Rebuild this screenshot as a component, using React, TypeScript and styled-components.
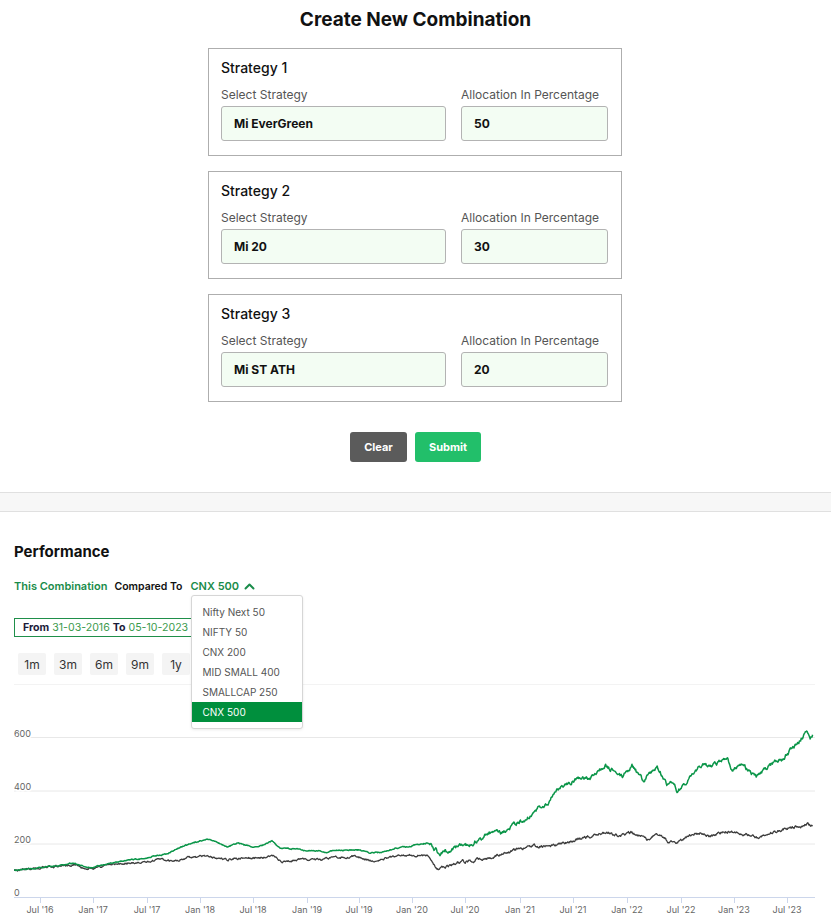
import React from "react";
import styled, { createGlobalStyle } from "styled-components";

const GlobalStyle = createGlobalStyle`
  html, body { margin: 0; padding: 0; background: #fff; }
  body { font-family: Inter, "Noto Sans", "Liberation Sans", sans-serif; color: #111; }
  * { box-sizing: border-box; }
`;

const Page = styled.div`
  width: 831px;
  padding-top: 8px;
`;

const Title = styled.h1`
  margin: 0 0 17px;
  font-size: 19px;
  line-height: 23px;
  font-weight: 700;
  text-align: center;
  color: #111;
`;

const CardList = styled.div`
  display: flex;
  flex-direction: column;
  gap: 15px;
  width: 414px;
  margin: 0 209px 0 208px;
`;

const Card = styled.div`
  border: 1px solid #aeaeae;
  padding: 10px 12px 14px;
`;

const CardTitle = styled.div`
  font-size: 14px;
  line-height: 17px;
  font-weight: 500;
  margin-bottom: 11px;
  color: #111;
`;

const FieldGrid = styled.div`
  display: grid;
  grid-template-columns: 225px 147px;
  column-gap: 15px;
`;

const Field = styled.div`
  display: flex;
  flex-direction: column;
`;

const Label = styled.label`
  font-size: 12px;
  line-height: 15px;
  color: #555;
  margin-bottom: 4px;
  white-space: nowrap;
`;

const Input = styled.input`
  height: 35px;
  width: 100%;
  border: 1px solid #b3b3b3;
  border-radius: 3px;
  background: #f3fdf3;
  padding: 0 12px;
  font-family: inherit;
  font-size: 12px;
  font-weight: 700;
  color: #111;
  outline: none;
`;

const Actions = styled.div`
  display: flex;
  justify-content: center;
  gap: 8px;
  margin-top: 30px;
`;

const Button = styled.button<{ $variant: "clear" | "submit" }>`
  height: 30px;
  width: ${(p) => (p.$variant === "clear" ? "57px" : "66px")};
  border: none;
  border-radius: 3px;
  background: ${(p) => (p.$variant === "clear" ? "#5b5b5b" : "#22bf6a")};
  color: #fff;
  font-family: inherit;
  font-size: 11px;
  font-weight: 700;
  cursor: pointer;
`;

const Band = styled.div`
  margin-top: 30px;
  height: 20px;
  background: #f7f7f7;
  border-top: 1px solid #e0e0e0;
  border-bottom: 1px solid #e0e0e0;
`;

const Perf = styled.section`
  padding: 31px 0 0 14px;
`;

const PerfTitle = styled.h2`
  margin: 0 0 18px;
  font-size: 15px;
  line-height: 18px;
  font-weight: 700;
  color: #111;
`;

const CompareRow = styled.div`
  display: flex;
  align-items: center;
  gap: 7px;
  height: 14px;
  font-size: 11px;
  font-weight: 600;
`;

const Tag = styled.span<{ $green?: boolean; $size?: number }>`
  color: ${(p) => (p.$green ? "#1a8c4a" : "#111")};
  font-size: ${(p) => p.$size ?? 11}px;
  white-space: nowrap;
`;

const Picker = styled.div`
  position: relative;
  display: flex;
  align-items: center;
  gap: 5px;
  margin-left: 1px;
  color: #1a8c4a;
  font-size: 11px;
  font-weight: 600;
`;

const Menu = styled.ul`
  position: absolute;
  left: 0;
  top: 16px;
  width: 112px;
  margin: 0;
  padding: 6px 0;
  list-style: none;
  background: #fff;
  border: 1px solid #d6d6d6;
  border-radius: 3px;
  box-shadow: 0 1px 3px rgba(0, 0, 0, 0.08);
  z-index: 10;
`;

const MenuItem = styled.li<{ $active?: boolean }>`
  height: 20px;
  line-height: 20px;
  padding-left: 11px;
  font-size: 10px;
  font-weight: 400;
  white-space: nowrap;
  color: ${(p) => (p.$active ? "#fff" : "#555")};
  background: ${(p) => (p.$active ? "#008f3d" : "transparent")};
`;

const DateBox = styled.div`
  display: inline-flex;
  align-items: center;
  gap: 3px;
  margin-top: 25px;
  height: 19px;
  padding: 0 9px 0 8px;
  border: 1px solid #1f8f4a;
  font-size: 10.6px;
  white-space: nowrap;
`;

const DateKey = styled.b`
  color: #1b1b3a;
  font-weight: 700;
`;

const DateVal = styled.span`
  color: #3b9a4c;
`;

const Periods = styled.div`
  display: flex;
  gap: 8px;
  margin: 16px 0 0 4px;
`;

const Period = styled.button`
  width: 28px;
  height: 22px;
  border: none;
  border-radius: 2px;
  background: #f4f4f4;
  color: #333;
  font-family: inherit;
  font-size: 12px;
  padding: 0;
`;

const ChartSvg = styled.svg`
  display: block;
  margin-top: 9px;
`;

function mulberry32(a: number) {
  return function () {
    a |= 0;
    a = (a + 0x6d2b79f5) | 0;
    let t = Math.imul(a ^ (a >>> 15), 1 | a);
    t = (t + Math.imul(t ^ (t >>> 7), 61 | t)) ^ t;
    return ((t ^ (t >>> 14)) >>> 0) / 4294967296;
  };
}

const OX = 14;
const OY = 683;
const yOf = (v: number) => 896 - v * 0.265 - OY;

function buildPath(keys: [number, number][], seed: number, amp: (x: number) => number) {
  const rnd = mulberry32(seed);
  let n = 0;
  const pts: string[] = [];
  const last = keys[keys.length - 1][0];
  let i = 0;
  for (let x = keys[0][0]; x <= last + 0.01; x += 0.6) {
    while (i < keys.length - 2 && keys[i + 1][0] < x) i++;
    const [x0, v0] = keys[i];
    const [x1, v1] = keys[i + 1];
    const t = Math.min(1, Math.max(0, (x - x0) / (x1 - x0)));
    const v = v0 + (v1 - v0) * t;
    n = n * 0.7 + (rnd() - 0.5) * amp(x);
    pts.push(`${(x - OX).toFixed(1)},${(yOf(v) + n).toFixed(1)}`);
  }
  return "M" + pts.join("L");
}

const greenKeys: [number, number][] = [
  [14, 100], [40, 110], [60, 121], [75, 128], [83, 117], [93, 110], [107, 125], [127, 140],
  [147, 147], [157, 158], [167, 162], [183, 192], [200, 211], [210, 219], [227, 189], [237, 204],
  [253, 189], [263, 196], [272, 211], [280, 185], [293, 181], [327, 170], [333, 177], [360, 177],
  [370, 166], [383, 170], [397, 185], [410, 192], [427, 204], [432, 192], [440, 162], [453, 181],
  [473, 204], [493, 249], [502, 241], [517, 279], [527, 298], [540, 343], [547, 351], [557, 400],
  [567, 430], [583, 453], [590, 445], [605, 498], [623, 457], [632, 494], [643, 438], [657, 491],
  [667, 426], [673, 438], [677, 404], [687, 430], [703, 506], [710, 487], [727, 525], [732, 475],
  [740, 502], [757, 453], [770, 502], [783, 525], [797, 577], [807, 623], [810, 600], [813, 615],
];

const blackKeys: [number, number][] = [
  [14, 100], [40, 110], [77, 121], [82, 110], [93, 106], [110, 125], [147, 132], [160, 140],
  [173, 136], [187, 147], [208, 155], [213, 147], [227, 140], [240, 147], [257, 147], [272, 155],
  [283, 132], [300, 143], [320, 140], [333, 151], [347, 147], [353, 155], [373, 136], [393, 151],
  [410, 158], [428, 155], [437, 106], [450, 121], [463, 132], [493, 151], [510, 174], [530, 192],
  [550, 192], [570, 211], [590, 230], [607, 245], [620, 230], [632, 245], [647, 219], [657, 238],
  [667, 211], [677, 204], [693, 238], [703, 242], [710, 230], [727, 249], [743, 238], [758, 223],
  [770, 242], [787, 257], [800, 268], [808, 275], [813, 268],
];

const greenPath = buildPath(greenKeys, 7, (x) => (x < 430 ? 0.8 : 3.2));
const blackPath = buildPath(blackKeys, 21, (x) => (x < 430 ? 1.6 : 2.2));

const xTicks: [number, string][] = [
  [40, "Jul '16"], [93, "Jan '17"], [147, "Jul '17"], [200, "Jan '18"], [253, "Jul '18"],
  [307, "Jan '19"], [359, "Jul '19"], [412, "Jan '20"], [465, "Jul '20"], [520, "Jan '21"],
  [573, "Jul '21"], [627, "Jan '22"], [681, "Jul '22"], [734, "Jan '23"], [787, "Jul '23"],
];

const grid: [number, string][] = [
  [683, ""], [736.5, "600"], [790, "400"], [843, "200"],
];

function Chart() {
  return (
    <ChartSvg width={817} height={236} viewBox="0 0 817 236">
      {grid.map(([y, label]) => (
        <g key={y}>
          <line x1={0} x2={801} y1={y - OY} y2={y - OY} stroke="#e8e8e8" strokeWidth={1} />
          {label && (
            <text
              x={0}
              y={y - OY - 1}
              fontSize={9}
              fill="#666"
              stroke="#fff"
              strokeWidth={3}
              paintOrder="stroke"
              fontFamily="Inter, sans-serif"
            >
              {label}
            </text>
          )}
        </g>
      ))}
      <line x1={0} x2={801} y1={896.5 - OY} y2={896.5 - OY} stroke="#ccd6eb" strokeWidth={1} />
      <text x={0} y={895 - OY} fontSize={9} fill="#666" fontFamily="Inter, sans-serif">
        0
      </text>
      {xTicks.map(([x, label]) => (
        <g key={label}>
          <line x1={x - OX + 0.5} x2={x - OX + 0.5} y1={897 - OY} y2={902 - OY} stroke="#ccd6eb" />
          <text
            x={x - OX}
            y={912 - OY}
            fontSize={9}
            fill="#666"
            textAnchor="middle"
            fontFamily="Inter, sans-serif"
          >
            {label}
          </text>
        </g>
      ))}
      <path d={blackPath} fill="none" stroke="#3d3d3d" strokeWidth={1.3} strokeLinejoin="round" />
      <path d={greenPath} fill="none" stroke="#0a9548" strokeWidth={1.5} strokeLinejoin="round" />
    </ChartSvg>
  );
}

const strategies = [
  { name: "Mi EverGreen", alloc: "50" },
  { name: "Mi 20", alloc: "30" },
  { name: "Mi ST ATH", alloc: "20" },
];

const indices = ["Nifty Next 50", "NIFTY 50", "CNX 200", "MID SMALL 400", "SMALLCAP 250", "CNX 500"];

function ChevronUp() {
  return (
    <svg width="11" height="8" viewBox="0 0 11 8" fill="none">
      <path d="M1.5 6.5 L5.5 2.5 L9.5 6.5" stroke="#1a8c4a" strokeWidth="2" strokeLinecap="round" strokeLinejoin="round" />
    </svg>
  );
}

export default function App() {
  return (
    <Page>
      <GlobalStyle />
      <Title>Create New Combination</Title>
      <CardList>
        {strategies.map((s, i) => (
          <Card key={i}>
            <CardTitle>Strategy {i + 1}</CardTitle>
            <FieldGrid>
              <Field>
                <Label>Select Strategy</Label>
                <Input readOnly value={s.name} />
              </Field>
              <Field>
                <Label>Allocation In Percentage</Label>
                <Input readOnly value={s.alloc} />
              </Field>
            </FieldGrid>
          </Card>
        ))}
      </CardList>
      <Actions>
        <Button $variant="clear">Clear</Button>
        <Button $variant="submit">Submit</Button>
      </Actions>
      <Band />
      <Perf>
        <PerfTitle>Performance</PerfTitle>
        <CompareRow>
          <Tag $green>This Combination</Tag>
          <Tag $size={10.5}>Compared To</Tag>
          <Picker>
            <span>CNX 500</span>
            <ChevronUp />
            <Menu>
              {indices.map((n) => (
                <MenuItem key={n} $active={n === "CNX 500"}>
                  {n}
                </MenuItem>
              ))}
            </Menu>
          </Picker>
        </CompareRow>
        <DateBox>
          <DateKey>From</DateKey>
          <DateVal>31-03-2016</DateVal>
          <DateKey>To</DateKey>
          <DateVal>05-10-2023</DateVal>
        </DateBox>
        <Periods>
          {["1m", "3m", "6m", "9m", "1y"].map((p) => (
            <Period key={p}>{p}</Period>
          ))}
        </Periods>
        <Chart />
      </Perf>
    </Page>
  );
}
